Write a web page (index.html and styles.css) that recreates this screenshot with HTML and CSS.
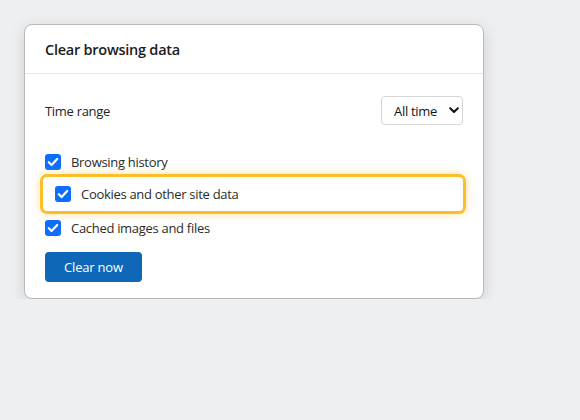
FILE: index.html
```html
<!DOCTYPE html>
<html>
<head>
<meta charset="utf-8">
<link rel="stylesheet" href="styles.css">
</head>
<body>
<div class="card">
  <div class="card-header">Clear browsing data</div>
  <div class="card-body">
    <div class="range-row">
      <span class="label">Time range</span>
      <span class="select">All time
        <svg class="chev" width="10" height="7" viewBox="0 0 10 7"><path d="M1.2 1.3 L5 5 L8.8 1.3" fill="none" stroke="#111" stroke-width="2" stroke-linecap="round" stroke-linejoin="round"/></svg>
      </span>
    </div>
    <div class="checks">
      <div class="check-row">
        <span class="box"><svg width="16" height="16" viewBox="0 0 16 16"><path d="M3.8 8.2 L6.6 11 L12.2 5" fill="none" stroke="#fff" stroke-width="2.2" stroke-linecap="round" stroke-linejoin="round"/></svg></span>
        <span class="text">Browsing history</span>
      </div>
      <div class="check-row highlight">
        <span class="box"><svg width="16" height="16" viewBox="0 0 16 16"><path d="M3.8 8.2 L6.6 11 L12.2 5" fill="none" stroke="#fff" stroke-width="2.2" stroke-linecap="round" stroke-linejoin="round"/></svg></span>
        <span class="text">Cookies and other site data</span>
      </div>
      <div class="check-row last">
        <span class="box"><svg width="16" height="16" viewBox="0 0 16 16"><path d="M3.8 8.2 L6.6 11 L12.2 5" fill="none" stroke="#fff" stroke-width="2.2" stroke-linecap="round" stroke-linejoin="round"/></svg></span>
        <span class="text">Cached images and files</span>
      </div>
    </div>
    <button class="btn">Clear now</button>
  </div>
</div>
</body>
</html>
```
FILE: styles.css
```css
html, body {
  margin: 0;
  padding: 0;
  background: #eeeff1;
  font-family: "Open Sans", "Noto Sans", sans-serif;
  color: #222;
}
body {
  padding: 24px 0 0 24px;
}
.card {
  box-sizing: border-box;
  width: 460px;
  background: #fff;
  border: 1px solid #b9b9bb;
  border-radius: 8px;
  box-shadow: 0 4px 16px rgba(0,0,0,0.13);
}
.card-header {
  height: 48px;
  display: flex;
  align-items: center;
  padding: 0 20px;
  border-bottom: 1px solid #e6e6e6;
  font-size: 14.5px;
  font-weight: 600;
  letter-spacing: -0.25px;
  color: #1b1b1b;
}
.card-body {
  padding: 22px 20px 16px 20px;
}
.range-row {
  display: flex;
  align-items: center;
  justify-content: space-between;
  height: 29px;
}
.label {
  font-size: 13px;
  letter-spacing: -0.3px;
  color: #242424;
}
.select {
  box-sizing: border-box;
  height: 29px;
  width: 82px;
  display: flex;
  align-items: center;
  justify-content: space-between;
  padding: 0 3px 0 12px;
  border: 1px solid #d6d6d6;
  border-radius: 4px;
  font-size: 13px;
  letter-spacing: -0.3px;
  color: #111;
}
.checks {
  margin-top: 24px;
  display: flex;
  flex-direction: column;
}
.check-row {
  display: flex;
  align-items: center;
  gap: 10px;
  height: 26px;
}
.check-row.last {
  height: 28px;
}
.highlight {
  box-sizing: border-box;
  height: 40px;
  margin: -1px -3px 0 -5px;
  padding: 0 12px;
  border: 3px solid #fbbf2a;
  border-radius: 7px;
  box-shadow: 0 0 8px rgba(251, 191, 42, 0.45);
}
.box {
  width: 16px;
  height: 16px;
  border-radius: 3px;
  background: #0d6efd;
  display: flex;
  flex: none;
}
.text {
  font-size: 13px;
  letter-spacing: -0.3px;
  color: #2b2b2b;
}
.btn {
  margin-top: 10px;
  height: 30px;
  width: 97px;
  border: none;
  border-radius: 4px;
  background: #0f67b8;
  color: #fff;
  font-family: inherit;
  font-size: 13px;
  letter-spacing: -0.2px;
  display: block;
}
```
